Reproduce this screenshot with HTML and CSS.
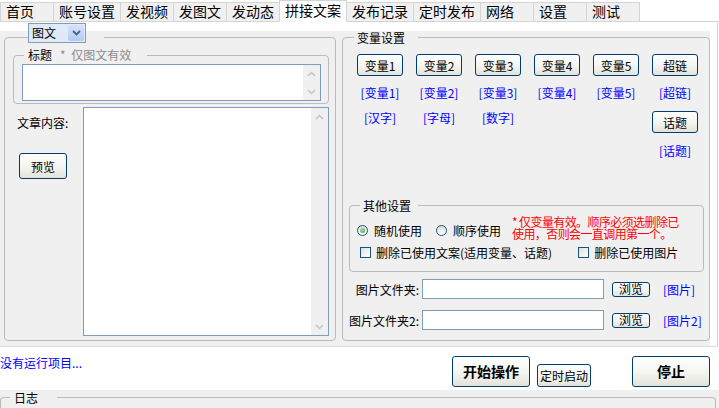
FILE: index.html
```html
<!DOCTYPE html>
<html lang="zh-CN">
<head>
<meta charset="UTF-8">
<title>拼接文案</title>
<link rel="stylesheet" href="styles.css">
</head>
<body>
<div class="tabs">
    <div class="tab">首页</div>
    <div class="tab">账号设置</div>
    <div class="tab">发视频</div>
    <div class="tab">发图文</div>
    <div class="tab">发动态</div>
    <div class="tab active">拼接文案</div>
    <div class="tab">发布记录</div>
    <div class="tab">定时发布</div>
    <div class="tab">网络</div>
    <div class="tab">设置</div>
    <div class="tab">测试</div>
</div>

<div class="page">
<div class="panel">
    <div class="group box-left">
        <div class="group-title combo-title">
            <div class="combo">
                <span class="combo-text">图文</span>
                <span class="combo-btn"><svg width="9" height="6" viewBox="0 0 9 6"><polyline points="1,1 4.5,4.5 8,1"/></svg></span>
            </div>
        </div>
        <div class="group box-title">
            <div class="group-title title-legend">标题<span class="hint">* 仅图文有效</span></div>
            <div class="textbox title-input">
                <textarea></textarea>
                <div class="vscroll">
                    <span class="arrow"><svg width="9" height="6" viewBox="0 0 9 6"><polyline points="1,5 4.5,1.5 8,5"/></svg></span>
                    <span class="arrow"><svg width="9" height="6" viewBox="0 0 9 6"><polyline points="1,1 4.5,4.5 8,1"/></svg></span>
                </div>
            </div>
        </div>
        <div class="content-row">
            <div class="content-side">
                <div class="content-label">文章内容:</div>
                <button class="btn btn-preview">预览</button>
            </div>
            <div class="textbox content-input">
                <textarea></textarea>
                <div class="vscroll">
                    <span class="arrow"><svg width="9" height="6" viewBox="0 0 9 6"><polyline points="1,5 4.5,1.5 8,5"/></svg></span>
                    <span class="arrow"><svg width="9" height="6" viewBox="0 0 9 6"><polyline points="1,1 4.5,4.5 8,1"/></svg></span>
                </div>
            </div>
        </div>
    </div>

    <div class="group box-right">
        <div class="group-title var-legend">变量设置</div>
        <div class="vars">
            <button class="btn btn-var">变量1</button>
            <button class="btn btn-var">变量2</button>
            <button class="btn btn-var">变量3</button>
            <button class="btn btn-var">变量4</button>
            <button class="btn btn-var">变量5</button>
            <button class="btn btn-var">超链</button>

            <span class="tag tag-top">[变量1]</span>
            <span class="tag tag-top">[变量2]</span>
            <span class="tag tag-top">[变量3]</span>
            <span class="tag tag-top">[变量4]</span>
            <span class="tag tag-top">[变量5]</span>
            <span class="tag tag-top">[超链]</span>

            <span class="tag">[汉字]</span>
            <span class="tag">[字母]</span>
            <span class="tag">[数字]</span>
            <button class="btn btn-var last-col">话题</button>

            <span class="tag last-col">[话题]</span>
        </div>

        <div class="group box-other">
            <div class="group-title other-legend">其他设置</div>
            <div class="radio-row">
                <label class="radio"><span class="dot checked"></span>随机使用</label>
                <label class="radio"><span class="dot"></span>顺序使用</label>
                <div class="warn">* 仅变量有效。顺序必须选删除已<br>使用，否则会一直调用第一个。</div>
            </div>
            <div class="check-row">
                <label class="check"><span class="box"></span>删除已使用文案(适用变量、话题)</label>
                <label class="check check-img"><span class="box"></span>删除已使用图片</label>
            </div>
        </div>

        <div class="file-row">
            <span class="file-label">图片文件夹:</span>
            <input class="file-input" type="text">
            <button class="btn btn-browse">浏览</button>
            <span class="file-tag">[图片]</span>
        </div>
        <div class="file-row file-row2">
            <span class="file-label">图片文件夹2:</span>
            <input class="file-input" type="text">
            <button class="btn btn-browse">浏览</button>
            <span class="file-tag">[图片2]</span>
        </div>
    </div>
</div>
</div>

<div class="status">
    <span class="status-text">没有运行项目...</span>
    <button class="btn btn-big">开始操作</button>
    <button class="btn btn-timer">定时启动</button>
    <button class="btn btn-big btn-stop">停止</button>
</div>

<div class="log">
    <div class="group box-log">
        <div class="group-title log-legend">日志</div>
    </div>
</div>
</body>
</html>
```

FILE: styles.css
```css
* {
    box-sizing: border-box;
}
html, body {
    margin: 0;
    padding: 0;
}
body {
    width: 719px;
    height: 408px;
    overflow: hidden;
    background: #fff;
    color: #000;
    font-family: "Noto Sans CJK SC", "Noto Sans", sans-serif;
    font-size: 12px;
    line-height: 13px;
}

/* tab strip */
.tabs {
    display: flex;
    align-items: flex-end;
    height: 22px;
    border-bottom: 1px solid #d4d4d4;
}
.tab {
    height: 19px;
    min-width: 54px;
    padding: 0 5px;
    margin-right: -1px;
    border: 1px solid #d4d4d4;
    border-bottom: none;
    background: #f0f0f0;
    font-size: 14px;
    line-height: 17px;
    white-space: nowrap;
}
.tab.active {
    height: 22px;
    margin-bottom: -1px;
    background: #fff;
    line-height: 19px;
}

.page {
    width: 718px;
    height: 325px;
    padding-top: 9px;
    border-right: 1px solid #d4d4d4;
    border-bottom: 1px solid #dcdcdc;
}
.panel {
    display: flex;
    align-items: flex-start;
    width: 710px;
    height: 315px;
    padding-left: 4px;
    background: #f0f0f0;
}

/* group boxes */
.group {
    border: 1px solid #bcbaba;
    border-radius: 4px;
}
.group-title {
    width: fit-content;
    margin-top: -7px;
    background: #f0f0f0;
    white-space: nowrap;
}

.box-left {
    width: 332px;
    height: 304px;
    margin-top: 6px;
}
.combo-title {
    margin: -15px 0 0 23px;
    padding-right: 18px;
    background: linear-gradient(transparent 8px, #f0f0f0 8px);
}
.combo {
    display: flex;
    width: 58px;
    height: 20px;
    border: 1px solid #7f9db9;
    background: #dfe9f7;
}
.combo-text {
    flex: 1;
    padding-left: 3px;
    line-height: 18px;
}
.combo-btn {
    display: flex;
    align-items: center;
    justify-content: center;
    width: 16px;
    margin: 1px;
    border-radius: 2px;
    background: linear-gradient(#d6e3f9, #b4caf1);
}
.combo-btn svg {
    fill: none;
    stroke: #4d6185;
    stroke-width: 1.8;
}

.box-title {
    height: 49px;
    margin: 12px 6px 0 8px;
}
.title-legend {
    margin: -8px 0 0 10px;
    padding: 0 16px 0 4px;
}
.hint {
    margin-left: 8px;
    color: #8c8c8c;
    word-spacing: 3px;
}

.textbox {
    display: flex;
    border: 1px solid #7f9db9;
    background: #fff;
}
.textbox textarea {
    flex: 1;
    margin: 0;
    padding: 0;
    border: none;
    outline: none;
    resize: none;
    overflow: hidden;
    background: #fff;
    font: inherit;
}
.vscroll {
    display: flex;
    flex-direction: column;
    justify-content: space-between;
    width: 17px;
    background: #f0f0f0;
}
.arrow {
    display: flex;
    align-items: center;
    justify-content: center;
    height: 17px;
}
.arrow svg {
    fill: none;
    stroke: #c4c4c4;
    stroke-width: 1.5;
}
.title-input {
    width: 299px;
    height: 37px;
    margin: 3px 0 0 8px;
}

.content-row {
    display: flex;
    margin-top: 3px;
}
.content-side {
    width: 78px;
}
.content-label {
    padding: 9px 0 0 12px;
}
.content-input {
    width: 246px;
    height: 229px;
}

/* buttons */
.btn {
    padding: 0;
    border: 1px solid #003c74;
    border-radius: 3px;
    background: linear-gradient(#ffffff, #f4f4f0 55%, #e4e2d8);
    color: #000;
    font: inherit;
    cursor: pointer;
}
.btn-preview {
    width: 48px;
    height: 26px;
    margin: 24px 0 0 14px;
}

.box-right {
    width: 368px;
    height: 304px;
    margin: 6px 0 0 6px;
}
.var-legend {
    margin-left: 11px;
    padding: 0 13px 0 3px;
}
.vars {
    display: grid;
    grid-template-columns: repeat(5, 46px) 47px;
    grid-template-rows: 22px 35px 33px 13px;
    column-gap: 13px;
    align-items: start;
    margin: 10px 0 0 14px;
}
.btn-var {
    width: 46px;
    height: 22px;
}
.tag {
    width: 46px;
    color: #0000ff;
    text-align: center;
}
.tag-top {
    margin-top: 10px;
}
.last-col {
    grid-column: 6;
}

.box-other {
    width: 355px;
    height: 67px;
    margin: 48px 0 0 6px;
}
.other-legend {
    margin-left: 10px;
    padding: 0 7px 0 3px;
}
.radio-row {
    display: flex;
    align-items: flex-start;
    margin-top: 4px;
    padding-left: 7px;
}
.radio {
    display: flex;
    align-items: center;
    gap: 6px;
    margin-top: 8px;
}
.radio + .radio {
    margin-left: 14px;
}
.dot {
    display: flex;
    align-items: center;
    justify-content: center;
    width: 11px;
    height: 11px;
    border: 1px solid #1c5180;
    border-radius: 50%;
    background: linear-gradient(#dcdcd7, #fff);
}
.dot.checked::after {
    content: "";
    width: 5px;
    height: 5px;
    border-radius: 50%;
    background: radial-gradient(circle at 40% 40%, #a9e3a2, #3ea135);
}
.warn {
    margin-left: 11px;
    color: #ff0000;
    line-height: 12px;
    letter-spacing: -0.6px;
}
.check-row {
    display: flex;
    margin-top: 6px;
    padding-left: 10px;
}
.check {
    display: flex;
    align-items: center;
    gap: 5px;
}
.check-img {
    margin-left: 26px;
}
.box {
    width: 11px;
    height: 11px;
    border: 1px solid #1c5180;
    background: linear-gradient(135deg, #e0e0da, #fff);
}

.file-row {
    display: flex;
    align-items: center;
    height: 20px;
    margin-top: 7px;
}
.file-row2 {
    margin-top: 11px;
}
.file-label {
    width: 76px;
    text-align: right;
}
.file-input {
    width: 182px;
    height: 20px;
    margin: 0 0 0 3px;
    border: 1px solid #7f9db9;
    outline: none;
}
.btn-browse {
    width: 38px;
    height: 15px;
    margin-left: 8px;
    line-height: 12px;
}
.file-tag {
    margin-left: 13px;
    color: #0000ff;
}

/* bottom bar */
.status {
    display: flex;
    align-items: flex-start;
    height: 43px;
    padding: 9px 9px 0 0;
}
.status-text {
    margin-right: auto;
    color: #0000ff;
}
.btn-big {
    width: 78px;
    height: 31px;
    font-size: 14px;
    font-weight: bold;
}
.btn-timer {
    width: 54px;
    height: 23px;
    margin: 8px 0 0 7px;
}
.btn-stop {
    margin-left: 41px;
}

.log {
    height: 18px;
    padding-top: 7px;
    background: #f0f0f0;
}
.box-log {
    height: 11px;
    margin-right: 3px;
    border-bottom: none;
    border-radius: 4px 4px 0 0;
}
.log-legend {
    margin-left: 9px;
    padding: 0 19px 0 4px;
}
```
